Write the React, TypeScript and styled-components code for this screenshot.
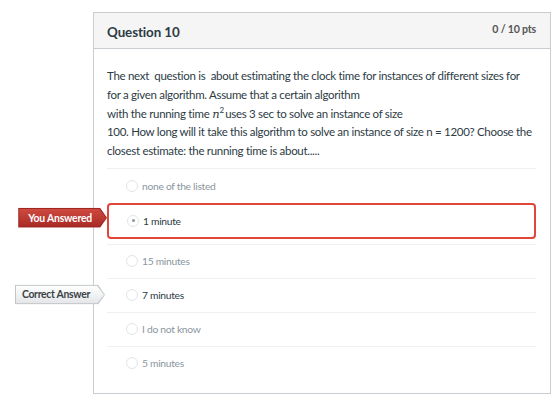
import styled, { createGlobalStyle, css } from "styled-components";

const GlobalStyle = createGlobalStyle`
  html, body {
    margin: 0;
    padding: 0;
    background: #ffffff;
    font-family: "Lato", "Open Sans", sans-serif;
    color: #2d3b45;
  }
`;

const Page = styled.div`
  padding: 12px 9px 10px 93px;
`;

const Card = styled.section`
  width: 458px;
  box-sizing: border-box;
  border: 1px solid #c7cdd1;
  background: #fff;
`;

const CardHeader = styled.header`
  display: flex;
  justify-content: space-between;
  align-items: center;
  height: 35px;
  padding: 0 14px 0 13px;
  background: #f5f5f5;
  border-bottom: 1px solid #c7cdd1;

  h2 {
    margin: 2px 0 0;
    font-size: 13.4px;
    font-weight: 700;
    letter-spacing: -0.1px;
    color: #2d3b45;
  }

  span {
    margin-top: -3px;
    font-size: 10.6px;
    font-weight: 700;
    letter-spacing: -0.2px;
    color: #555;
  }
`;

const CardBody = styled.div`
  padding: 18px 14px 13px 13px;
`;

const QuestionText = styled.div`
  font-size: 11.5px;
  letter-spacing: -0.3px;
  line-height: 18.8px;
  color: #2d3b45;
  padding-bottom: 7px;
  border-bottom: 1px solid #eef0f1;

  p {
    margin: 0;
    white-space: nowrap;
  }
`;

const MathVar = styled.span`
  font-family: "DejaVu Serif", "Liberation Serif", serif;
  font-style: italic;
  font-size: 11.5px;
  letter-spacing: 0;
  margin-right: 1px;

  sup {
    font-style: normal;
    font-family: "Lato", sans-serif;
    font-size: 8px;
    vertical-align: 5px;
    line-height: 0;
  }
`;

const AnswerList = styled.div`
  display: flex;
  flex-direction: column;
`;

const AnswerRow = styled.div<{ $answered?: boolean; $divided?: boolean; $strong?: boolean }>`
  position: relative;
  display: flex;
  align-items: center;
  gap: 4px;
  height: 33px;
  padding-left: 19px;
  font-size: 10.3px;
  letter-spacing: -0.3px;
  color: ${(p) => (p.$strong ? "#2d3b45" : "#8b969e")};
  border-top: 1px solid ${(p) => (p.$divided ? "#eef0f1" : "transparent")};

  ${(p) =>
    p.$answered &&
    css`
      height: 32px;
      padding-left: 18px;
      border: 2px solid #e1463a;
      border-radius: 4px;
      margin-bottom: 5px;
    `}
`;

const Radio = styled.span<{ $checked?: boolean }>`
  position: relative;
  width: 10px;
  height: 10px;
  border: 1px solid #e1e5e8;
  border-radius: 50%;
  background: #fff;

  ${(p) =>
    p.$checked &&
    css`
      &::after {
        content: "";
        position: absolute;
        left: 3.5px;
        top: 3.5px;
        width: 3px;
        height: 3px;
        border-radius: 50%;
        background: #8b969e;
      }
    `}
`;

const tagShape = "polygon(0 0, calc(100% - 7px) 0, 100% 50%, calc(100% - 7px) 100%, 0 100%)";

const Tag = styled.div<{ $tone: "wrong" | "right" }>`
  position: absolute;
  top: 50%;
  right: calc(100% + 2px);
  transform: translateY(${(p) => (p.$tone === "wrong" ? "-66%" : "-54%")});
  padding: 1px;
  clip-path: ${tagShape};
  background: ${(p) => (p.$tone === "wrong" ? "#9d241f" : "#c3c7ca")};

  span {
    display: block;
    height: 18px;
    line-height: 18px;
    padding: 0 14px 0 ${(p) => (p.$tone === "wrong" ? "9px" : "6px")};
    clip-path: ${tagShape};
    white-space: nowrap;
    font-size: 10.4px;
    letter-spacing: ${(p) => (p.$tone === "wrong" ? "-0.2px" : "-0.3px")};
    font-weight: 700;
    ${(p) =>
      p.$tone === "wrong"
        ? css`
            color: #fff;
            background: linear-gradient(#cf4a40, #a82b25);
          `
        : css`
            color: #3b4247;
            background: linear-gradient(#ffffff, #e4e6e8);
          `}
  }
`;

type Answer = {
  text: string;
  answered?: boolean;
  correct?: boolean;
};

const answers: Answer[] = [
  { text: "none of the listed" },
  { text: "1 minute", answered: true },
  { text: "15 minutes" },
  { text: "7 minutes", correct: true },
  { text: "I do not know" },
  { text: "5 minutes" },
];

export default function App() {
  return (
    <>
      <GlobalStyle />
      <Page>
        <Card>
          <CardHeader>
            <h2>Question 10</h2>
            <span>0 / 10 pts</span>
          </CardHeader>
          <CardBody>
            <QuestionText>
              <p>
                The next&nbsp; question is&nbsp; about estimating the clock time for instances of
                different sizes for
                <br />
                for a given algorithm. Assume that a certain algorithm
              </p>
              <p>
                with the running time{" "}
                <MathVar>
                  n<sup>2</sup>
                </MathVar>
                uses 3 sec to solve an instance of size
              </p>
              <p>
                100. How long will it take this algorithm to solve an instance of size n = 1200?
                Choose the
                <br />
                closest estimate: the running time is about.....
              </p>
            </QuestionText>
            <AnswerList>
              {answers.map((a, i) => (
                <AnswerRow
                  key={a.text}
                  $answered={a.answered}
                  $divided={i > 1}
                  $strong={a.answered || a.correct}
                >
                  {a.answered && (
                    <Tag $tone="wrong">
                      <span>You Answered</span>
                    </Tag>
                  )}
                  {a.correct && (
                    <Tag $tone="right">
                      <span>Correct Answer</span>
                    </Tag>
                  )}
                  <Radio $checked={a.answered} />
                  {a.text}
                </AnswerRow>
              ))}
            </AnswerList>
          </CardBody>
        </Card>
      </Page>
    </>
  );
}
